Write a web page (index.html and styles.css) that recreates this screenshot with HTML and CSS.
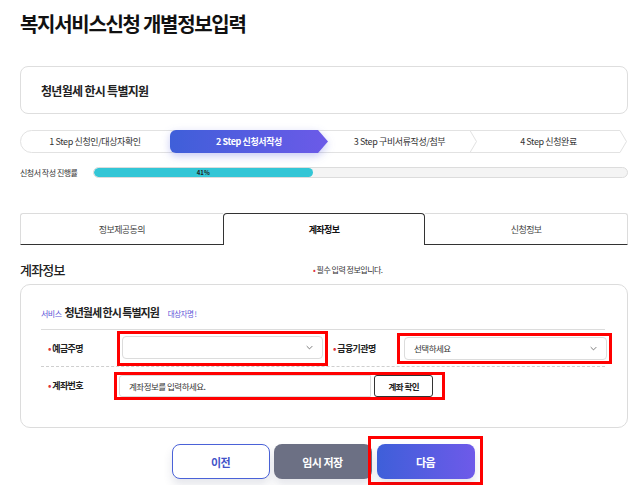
FILE: index.html
```html
<!DOCTYPE html>
<html>
<head>
    <title>복지서비스신청 개별정보입력</title>
    <link rel="stylesheet" href="styles.css">
</head>
<body>
    <div class="page">
        <h1 class="page-title">복지서비스신청 개별정보입력</h1>

        <div class="service-card">청년월세 한시 특별지원</div>

        <div class="steps">
            <div class="step step-1">
                <svg class="step-bg" viewBox="0 0 158 23" preserveAspectRatio="none">
                    <path d="M160 0.5 H11.5 A11 11 0 0 0 11.5 22.5 H160" fill="#fff" stroke="#e2e2e2"/>
                </svg>
                <span>1 Step 신청인/대상자확인</span>
            </div>
            <div class="step step-2 active">
                <svg class="step-bg" viewBox="0 0 158 23" preserveAspectRatio="none">
                    <defs>
                        <linearGradient id="stepGrad" x1="0" x2="1" y1="0" y2="0">
                            <stop offset="0" stop-color="#3f5fd9"/>
                            <stop offset="1" stop-color="#6c5ae8"/>
                        </linearGradient>
                    </defs>
                    <path d="M6 0 H148 L158 11.5 L148 23 H6 A6 6 0 0 1 0 17 V6 A6 6 0 0 1 6 0 Z" fill="url(#stepGrad)"/>
                </svg>
                <span>2 Step 신청서작성</span>
            </div>
            <div class="step step-3">
                <svg class="step-bg" viewBox="0 0 159 23" preserveAspectRatio="none">
                    <path d="M0 0.5 H152 L158.5 11.5 L152 22.5 H0" fill="#fff" stroke="#e2e2e2"/>
                </svg>
                <span>3 Step 구비서류작성/첨부</span>
            </div>
            <div class="step step-4">
                <svg class="step-bg" viewBox="0 0 157 23" preserveAspectRatio="none">
                    <path d="M0 0.5 H150 L156.5 11.5 L150 22.5 H0" fill="#fff" stroke="#e2e2e2"/>
                </svg>
                <span>4 Step 신청완료</span>
            </div>
        </div>

        <div class="progress-row">
            <div class="progress-label">신청서 작성 진행률</div>
            <div class="progress-bar">
                <div class="progress-fill" style="width: 41%;">41%</div>
            </div>
        </div>

        <div class="tabs">
            <div class="tab">정보제공동의</div>
            <div class="tab active">계좌정보</div>
            <div class="tab">신청정보</div>
        </div>

        <div class="section-head">
            <h2 class="section-title">계좌정보</h2>
            <div class="required-note"><span class="dot">•</span> 필수 입력 정보입니다.</div>
        </div>

        <div class="form-card">
            <div class="form-service">
                <span class="svc-tag">서비스</span>
                <span class="svc-name">청년월세 한시 특별지원</span>
                <span class="svc-target">대상자명 !</span>
            </div>

            <div class="form-row row-first">
                <div class="form-col">
                    <label class="field-label"><span class="dot">•</span> 예금주명</label>
                    <div class="mark mark-1">
                        <div class="select">
                            <span class="select-text"></span>
                            <svg class="chev" viewBox="0 0 10 6"><path d="M1 1 L5 5 L9 1" fill="none" stroke="#555" stroke-width="1.1"/></svg>
                        </div>
                    </div>
                </div>
                <div class="form-col">
                    <label class="field-label label-second"><span class="dot">•</span> 금융기관명</label>
                    <div class="mark mark-2">
                        <div class="select">
                            <span class="select-text">선택하세요</span>
                            <svg class="chev" viewBox="0 0 10 6"><path d="M1 1 L5 5 L9 1" fill="none" stroke="#555" stroke-width="1.1"/></svg>
                        </div>
                    </div>
                </div>
            </div>

            <div class="form-row">
                <div class="form-col">
                    <label class="field-label"><span class="dot">•</span> 계좌번호</label>
                    <div class="mark mark-3">
                        <input class="text-input" type="text" placeholder="계좌정보를 입력하세요.">
                        <button class="check-button">계좌 확인</button>
                    </div>
                </div>
            </div>
        </div>

        <div class="actions">
            <button class="btn btn-prev">이전</button>
            <button class="btn btn-save">임시 저장</button>
            <div class="mark mark-4">
                <button class="btn btn-next">다음</button>
            </div>
        </div>
    </div>
</body>
</html>
```

FILE: styles.css
```css
body {
    margin: 0;
    font-family: 'Noto Sans CJK KR', 'Noto Sans', sans-serif;
    color: #222;
    background: #fff;
}

.page {
    width: 608px;
    padding: 11px 0 0 20px;
}

.page-title {
    margin: 0;
    font-size: 20px;
    line-height: 26px;
    font-weight: 700;
    letter-spacing: -1.3px;
    color: #111;
}

.service-card {
    margin-top: 29px;
    height: 46px;
    border: 1px solid #dedede;
    border-radius: 8px;
    padding-left: 20px;
    display: flex;
    align-items: center;
    font-size: 12px;
    font-weight: 700;
    letter-spacing: -0.7px;
    color: #222;
}

/* steps */
.steps {
    margin-top: 16px;
    height: 23px;
    display: flex;
}

.step {
    position: relative;
    height: 23px;
    display: flex;
    align-items: center;
    justify-content: center;
    font-size: 9px;
    letter-spacing: -0.4px;
    color: #333;
}

.step span {
    position: relative;
}

.step-bg {
    position: absolute;
    left: 0;
    top: 0;
    width: 100%;
    height: 100%;
    overflow: visible;
}

.step-1 {
    width: 158px;
    margin-right: -8px;
    z-index: 1;
}

.step-1 span {
    left: -4px;
}

.step-2 {
    width: 158px;
    z-index: 4;
    color: #fff;
    font-weight: 700;
}

.step-2 .step-bg {
    filter: drop-shadow(0 3px 4px rgba(70, 80, 220, 0.3));
}

.step-3 {
    width: 159px;
    margin-left: -10px;
    z-index: 3;
}

.step-3 span {
    left: 2px;
}

.step-4 {
    width: 157px;
    margin-left: -7px;
    z-index: 2;
}

/* progress */
.progress-row {
    margin-top: 14px;
    display: flex;
    align-items: center;
}

.progress-label {
    width: 73px;
    font-size: 8px;
    letter-spacing: -0.5px;
    color: #333;
}

.progress-bar {
    flex: 1;
    height: 9px;
    border: 1px solid #dcdcdc;
    border-radius: 6px;
    background: #f4f4f4;
    overflow: hidden;
}

.progress-fill {
    height: 100%;
    background: #33c6d6;
    border-radius: 6px;
    font-size: 6px;
    font-weight: 700;
    line-height: 9px;
    text-align: center;
    color: #222;
}

/* tabs */
.tabs {
    margin-top: 35px;
    display: grid;
    grid-template-columns: repeat(3, 1fr);
    height: 32px;
}

.tab {
    display: flex;
    align-items: center;
    justify-content: center;
    font-size: 9px;
    letter-spacing: -0.6px;
    color: #444;
    border-top: 1px solid #dcdcdc;
    border-bottom: 1.5px solid #333;
}

.tab:first-child {
    border-left: 1px solid #dcdcdc;
    border-top-left-radius: 3px;
}

.tab:last-child {
    border-right: 1px solid #dcdcdc;
    border-top-right-radius: 3px;
}

.tab.active {
    border: 1.5px solid #333;
    border-bottom: none;
    border-radius: 4px 4px 0 0;
    font-weight: 700;
    color: #111;
}

/* section */
.section-head {
    margin-top: 15px;
    display: flex;
    align-items: center;
    height: 18px;
}

.section-title {
    margin: 0;
    width: 293px;
    font-size: 13px;
    font-weight: 500;
    letter-spacing: -0.8px;
    color: #222;
}

.required-note {
    font-size: 8px;
    letter-spacing: -0.5px;
    color: #333;
}

.dot {
    color: #e0323a;
}

.form-card {
    margin-top: 6px;
    border: 1px solid #dcdcdc;
    border-radius: 10px;
    padding: 19px 22px 23px 20px;
}

.form-service {
    display: flex;
    align-items: baseline;
    gap: 3px;
    padding-bottom: 9px;
    border-bottom: 1px solid #dcdcdc;
}

.svc-tag {
    font-size: 8px;
    color: #5d55d8;
    letter-spacing: -0.5px;
}

.svc-name {
    font-size: 11px;
    font-weight: 700;
    letter-spacing: -1px;
    color: #222;
}

.svc-target {
    margin-left: 6px;
    font-size: 7.5px;
    color: #5d55d8;
    letter-spacing: -0.5px;
}

.form-row {
    display: flex;
    align-items: center;
    height: 37px;
}

.row-first {
    height: 36px;
    border-bottom: 1px dashed #cfcfcf;
}

.form-col {
    display: flex;
    align-items: center;
}

.field-label {
    width: 69px;
    padding-left: 7px;
    font-size: 9px;
    font-weight: 700;
    letter-spacing: -0.6px;
    color: #222;
}

.label-second {
    padding-left: 0;
}

.mark {
    border: 3px solid #ff0000;
    box-sizing: border-box;
}

.mark-1 {
    width: 211px;
    padding: 2px 2px 4px 2px;
    margin-right: 5px;
}

.mark-2 {
    width: 215px;
    margin-left: -5px;
    padding: 1px 2px 1px 4px;
}

.mark-3 {
    display: flex;
    width: 331px;
    margin-left: -3px;
    padding: 0 9px 0 2px;
}

.select {
    height: 23px;
    box-sizing: border-box;
    border: 1px solid #dcdcdc;
    border-radius: 4px;
    display: flex;
    align-items: center;
    justify-content: space-between;
    padding: 0 9px;
    background: #fff;
}

.select-text {
    font-size: 8.5px;
    color: #333;
    letter-spacing: -0.5px;
}

.chev {
    width: 7px;
    height: 5px;
}

.text-input {
    width: 255px;
    height: 22px;
    box-sizing: border-box;
    margin: 0;
    border: 1px solid #dcdcdc;
    border-radius: 3px 0 0 3px;
    padding: 0 9px;
    font-family: inherit;
    font-size: 8.5px;
    letter-spacing: -0.5px;
    outline: none;
}

.text-input::placeholder {
    color: #333;
}

.check-button {
    width: 59px;
    height: 22px;
    margin: 0 0 0 3px;
    border: 1px solid #333;
    border-radius: 3px;
    background: #fff;
    font-family: inherit;
    font-size: 8.5px;
    font-weight: 700;
    letter-spacing: -0.5px;
    color: #222;
    cursor: pointer;
}

/* actions */
.actions {
    margin-top: 8px;
    display: flex;
    justify-content: center;
    align-items: flex-start;
    gap: 4px;
    padding-left: 6px;
}

.btn {
    width: 98px;
    height: 35px;
    margin-top: 8px;
    border-radius: 8px;
    border: none;
    font-family: inherit;
    font-size: 11px;
    font-weight: 700;
    letter-spacing: -0.5px;
    cursor: pointer;
    box-shadow: 0 6px 10px rgba(40, 50, 90, 0.12);
}

.btn-prev {
    background: #fff;
    border: 1.5px solid #4a62d8;
    color: #4252c8;
}

.btn-save {
    background: #6c7084;
    color: #fff;
}

.mark-4 {
    padding: 5px 5px 3px 6px;
    margin-left: -8px;
}

.btn-next {
    display: block;
    margin-top: 0;
    background: linear-gradient(90deg, #3e5fd9, #6e5ae9);
    color: #fff;
}
```
